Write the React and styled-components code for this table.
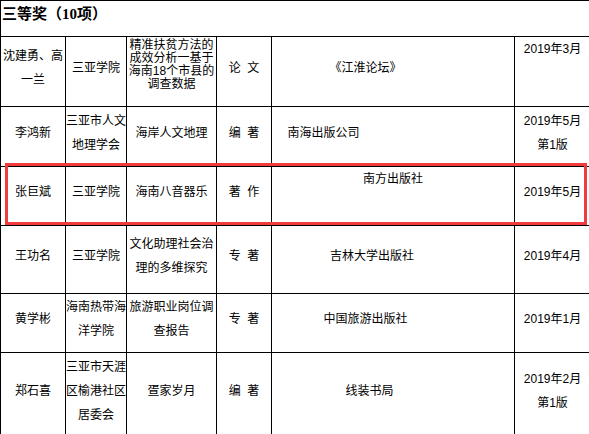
import React from "react";
import styled, { createGlobalStyle } from "styled-components";

const GlobalStyle = createGlobalStyle`
  html, body {
    margin: 0;
    background: #ffffff;
  }
`;

const Sheet = styled.div`
  position: relative;
  width: 589px;
  height: 434px;
  overflow: hidden;
  background: #ffffff;
`;

const Grid = styled.table`
  border-collapse: collapse;
  table-layout: fixed;
  width: 590px;
  font-family: "Liberation Sans", "Noto Sans CJK SC", sans-serif;
  font-size: 12px;
  color: #000000;
`;

const Row = styled.tr`
  height: ${(props) => props.$h}px;
`;

const TitleCell = styled.td`
  border: 1px solid #000000;
  padding: 1px 0 0 1px;
  vertical-align: top;
  text-align: left;
  font-family: "Liberation Serif", "Noto Sans CJK SC", serif;
  font-size: 15px;
  font-weight: bold;
  line-height: 24px;
`;

const Cell = styled.td`
  border: 1px solid #000000;
  padding: 0;
  padding-bottom: ${(props) => (props.$top ? 0 : props.$pb || 8)}px;
  padding-right: ${(props) => props.$pr || 0}px;
  vertical-align: ${(props) => (props.$top ? "top" : "middle")};
  text-align: center;
  line-height: ${(props) => props.$lh || 24}px;
  white-space: nowrap;
  word-spacing: ${(props) => (props.$spaced ? "3px" : "0")};
`;

const Highlight = styled.div`
  position: absolute;
  left: 5px;
  top: 163px;
  width: 582px;
  height: 62px;
  box-sizing: border-box;
  border: 3px solid #f23c3c;
  pointer-events: none;
`;

const lines = (text) =>
  text.split("|").map((part, i, all) => (
    <React.Fragment key={i}>
      {part}
      {i < all.length - 1 && <br />}
    </React.Fragment>
  ));

const rows = [
  {
    h: 70,
    name: "沈建勇、高|一兰",
    unit: "三亚学院",
    title: "精准扶贫方法的|成效分析一基于|海南18个市县的|调查数据",
    titleLh: 13,
    titlePb: 14,
    kind: "论 文",
    press: "《江淮论坛》",
    pressPr: 55,
    date: "2019年3月",
    dateTop: true,
  },
  {
    h: 60,
    name: "李鸿新",
    unit: "三亚市人文|地理学会",
    title: "海岸人文地理",
    kind: "编 著",
    press: "南海出版公司",
    pressPr: 139,
    date: "2019年5月|第1版",
  },
  {
    h: 59,
    name: "张巨斌",
    unit: "三亚学院",
    title: "海南八音器乐",
    kind: "著 作",
    press: "南方出版社",
    pressTop: true,
    date: "2019年5月",
  },
  {
    h: 68,
    name: "王功名",
    unit: "三亚学院",
    title: "文化助理社会治|理的多维探究",
    kind: "专 著",
    press: "吉林大学出版社",
    pressPr: 42,
    date: "2019年4月",
  },
  {
    h: 59,
    name: "黄学彬",
    unit: "海南热带海|洋学院",
    title: "旅游职业岗位调|查报告",
    kind: "专  著",
    press: "中国旅游出版社",
    pressPr: 55,
    date: "2019年1月",
  },
  {
    h: 84,
    name: "郑石喜",
    unit: "三亚市天涯|区榆港社区|居委会",
    title: "疍家岁月",
    kind: "编 著",
    press: "线装书局",
    pressPr: 47,
    date: "2019年2月|第1版",
  },
];

const App = () => {
  return (
    <Sheet>
      <GlobalStyle />
      <Grid>
        <colgroup>
          <col style={{ width: "65px" }} />
          <col style={{ width: "61px" }} />
          <col style={{ width: "90px" }} />
          <col style={{ width: "55px" }} />
          <col style={{ width: "243px" }} />
          <col style={{ width: "76px" }} />
        </colgroup>
        <tbody>
          <Row $h={36}>
            <TitleCell colSpan={6}>三等奖（10项）</TitleCell>
          </Row>
          {rows.map((r) => (
            <Row $h={r.h} key={r.name}>
              <Cell>{lines(r.name)}</Cell>
              <Cell>{lines(r.unit)}</Cell>
              <Cell $lh={r.titleLh} $pb={r.titlePb}>
                {lines(r.title)}
              </Cell>
              <Cell $spaced>{r.kind}</Cell>
              <Cell $top={r.pressTop} $pr={r.pressPr}>
                {r.press}
              </Cell>
              <Cell $top={r.dateTop}>{lines(r.date)}</Cell>
            </Row>
          ))}
        </tbody>
      </Grid>
      <Highlight />
    </Sheet>
  );
};

export default App;
